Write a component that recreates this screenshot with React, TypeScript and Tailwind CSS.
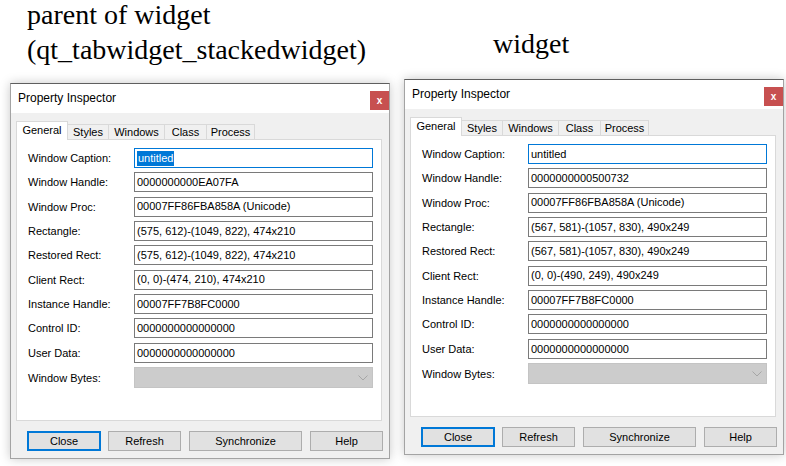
import React from "react";

const labels = [
  "Window Caption:",
  "Window Handle:",
  "Window Proc:",
  "Rectangle:",
  "Restored Rect:",
  "Client Rect:",
  "Instance Handle:",
  "Control ID:",
  "User Data:",
];

const leftValues = [
  "untitled",
  "0000000000EA07FA",
  "00007FF86FBA858A (Unicode)",
  "(575, 612)-(1049, 822), 474x210",
  "(575, 612)-(1049, 822), 474x210",
  "(0, 0)-(474, 210), 474x210",
  "00007FF7B8FC0000",
  "0000000000000000",
  "0000000000000000",
];

const rightValues = [
  "untitled",
  "0000000000500732",
  "00007FF86FBA858A (Unicode)",
  "(567, 581)-(1057, 830), 490x249",
  "(567, 581)-(1057, 830), 490x249",
  "(0, 0)-(490, 249), 490x249",
  "00007FF7B8FC0000",
  "0000000000000000",
  "0000000000000000",
];

const tabs = [
  { name: "Styles", w: "w-[41px]" },
  { name: "Windows", w: "w-[56px]" },
  { name: "Class", w: "w-[42px]" },
  { name: "Process", w: "w-[48px]" },
];

const font = { fontFamily: '"Liberation Sans", Arial, sans-serif' };

function Dialog({ values, selected }: { values: string[]; selected: boolean }) {
  return (
    <div
      className="w-[380px] h-[376px] flex flex-col bg-[#f0f0f0] border border-[#a3a3a3] border-t-[#5e5e5e] shadow-[0_0_10px_rgba(0,0,0,0.22)] text-black"
      style={font}
    >
      {/* title bar */}
      <div className="h-[29px] bg-white flex items-start justify-between">
        <span className="mt-[7px] ml-[7px] text-[12px] leading-[14px]">Property Inspector</span>
        <div className="mt-[7px] w-[19px] h-[19px] bg-[#c75050] flex items-center justify-center text-white text-[10px] font-bold leading-none">
          x
        </div>
      </div>

      <div className="flex flex-col pt-[8px] pl-[5px]">
        {/* tabs */}
        <div className="flex items-end h-[19px] -mb-px relative z-10 text-[11px]">
          <div className="w-[52px] h-[19px] bg-white border border-b-0 border-[#d9d9d9] flex items-center justify-center pb-[1px]">
            General
          </div>
          {tabs.map((t) => (
            <div
              key={t.name}
              className={`${t.w} h-[16px] border border-l-0 border-[#d9d9d9] flex items-center justify-center`}
            >
              {t.name}
            </div>
          ))}
        </div>

        {/* panel */}
        <div className="w-[366px] h-[282px] bg-white border border-[#d9d9d9] pt-[8px] pl-[11px] flex flex-col gap-[4.35px] text-[11px]">
          {labels.map((l, i) => (
            <div key={l} className="flex items-center h-[20px]">
              <span className="w-[106px] leading-[20px]">{l}</span>
              <div
                className={`w-[239px] h-[20px] border ${
                  i === 0 ? "border-[#0078d7]" : "border-[#7a7a7a]"
                } flex items-center pl-[2px] bg-white`}
              >
                {i === 0 && selected ? (
                  <span className="bg-[#0078d7] text-white leading-[15px] px-px">{values[i]}</span>
                ) : (
                  <span>{values[i]}</span>
                )}
              </div>
            </div>
          ))}
          <div className="flex items-center h-[21px]">
            <span className="w-[106px] leading-[20px]">Window Bytes:</span>
            <div className="w-[239px] h-[21px] bg-[#cccccc] border border-[#c4c4c4] flex items-center justify-end pr-[4px]">
              <svg width="10" height="6" viewBox="0 0 10 6" fill="none">
                <path d="M0.5 0.5 L5 5 L9.5 0.5" stroke="#a6a6a6" strokeWidth="1" />
              </svg>
            </div>
          </div>
        </div>

        {/* buttons */}
        <div className="flex mt-[10px] ml-[11px] text-[11px]">
          <div className="w-[74px] h-[20px] bg-[#e1e1e1] border-2 border-[#0078d7] flex items-center justify-center">
            Close
          </div>
          <div className="w-[73px] h-[20px] ml-[7px] bg-[#e1e1e1] border border-[#adadad] flex items-center justify-center">
            Refresh
          </div>
          <div className="w-[113px] h-[20px] ml-[8px] bg-[#e1e1e1] border border-[#adadad] flex items-center justify-center">
            Synchronize
          </div>
          <div className="w-[73px] h-[20px] ml-[8px] bg-[#e1e1e1] border border-[#adadad] flex items-center justify-center">
            Help
          </div>
        </div>
      </div>
    </div>
  );
}

export default function App() {
  const serif = { fontFamily: '"Liberation Serif", "Times New Roman", serif' };
  return (
    <div className="w-[786px] h-[466px] bg-white flex overflow-hidden">
      <div className="pl-[10px] flex flex-col">
        <div className="-mt-[3px] ml-[17px] text-[28px] leading-[35px] text-black" style={serif}>
          <div>parent of widget</div>
          <div>(qt_tabwidget_stackedwidget)</div>
        </div>
        <div className="mt-[16px]">
          <Dialog values={leftValues} selected />
        </div>
      </div>
      <div className="ml-[14px] flex flex-col">
        <div className="mt-[26px] ml-[89px] text-[28px] leading-[35px] text-black" style={serif}>
          widget
        </div>
        <div className="mt-[18px]">
          <Dialog values={rightValues} selected={false} />
        </div>
      </div>
    </div>
  );
}
